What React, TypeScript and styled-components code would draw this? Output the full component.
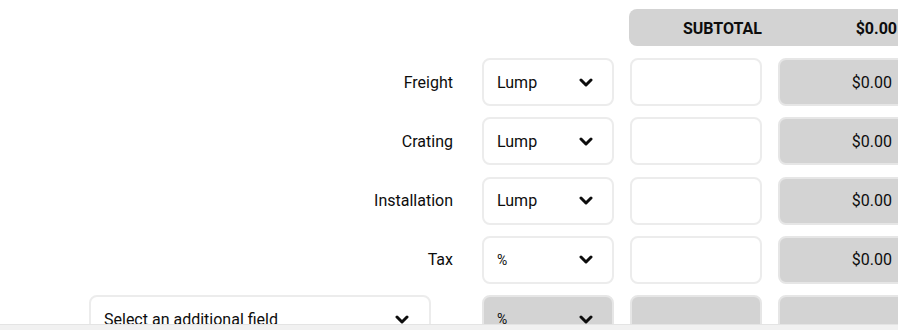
import React from "react";
import styled, { createGlobalStyle } from "styled-components";

const Global = createGlobalStyle`
  html, body { margin: 0; padding: 0; background: #fff; overflow: hidden; }
  body { font-family: Roboto, "Noto Sans", Arial, sans-serif; color: #0d0d0d; }
`;

const Page = styled.div`
  width: 911px;
  padding: 9px 0 0 89px;
  box-sizing: border-box;
`;

const Grid = styled.div`
  display: grid;
  grid-template-columns: 377px 132px 132px 132px;
  column-gap: 16px;
  row-gap: 11.25px;
`;

const SubtotalBar = styled.div`
  grid-column: 3 / span 2;
  margin-left: -1px;
  height: 37px;
  background: #d3d3d3;
  border-radius: 8px;
  display: grid;
  grid-template-columns: 133px 1fr;
  align-items: center;
  font-weight: 700;
  font-size: 16px;
  padding-top: 1px;
  box-sizing: border-box;
  margin-bottom: 0.75px;
`;

const SubLabel = styled.span`
  text-align: right;
`;

const SubValue = styled.span`
  text-align: right;
  padding-right: 13px;
`;

const Label = styled.div`
  display: flex;
  align-items: center;
  justify-content: flex-end;
  padding-right: 13px;
  font-size: 16px;
  height: 48px;
`;

const Box = styled.div<{ $disabled?: boolean }>`
  height: 48px;
  box-sizing: border-box;
  border: 2px solid ${(p) => (p.$disabled ? "#e6e6e6" : "#ececec")};
  border-radius: 8px;
  background: ${(p) => (p.$disabled ? "#d3d3d3" : "#fff")};
`;

const SelectBox = styled(Box)<{ $small?: boolean; $right?: number }>`
  display: flex;
  align-items: center;
  justify-content: space-between;
  padding: 0 ${(p) => p.$right ?? 19}px 0 13px;
  font-size: ${(p) => (p.$small ? "14px" : "16px")};
`;

const AdditionalSelect = styled(SelectBox)`
  width: 342px;
`;

const Amount = styled(Box)`
  background: #d3d3d3;
  border-color: #e6e6e6;
  display: flex;
  align-items: center;
  justify-content: flex-end;
  padding-right: 16px;
  font-size: 16px;
`;

const Footer = styled.div`
  position: fixed;
  left: 0;
  right: 0;
  bottom: 0;
  height: 5px;
  background: #f1f1f1;
  border-top: 1px solid #e4e4e4;
`;

const Chevron = () => (
  <svg width="14" height="9" viewBox="0 0 14 9" fill="none">
    <path d="M2 2l5 5 5-5" stroke="#0d0d0d" strokeWidth="3" strokeLinecap="round" strokeLinejoin="round" />
  </svg>
);

const rows = [
  { label: "Freight", unit: "Lump" },
  { label: "Crating", unit: "Lump" },
  { label: "Installation", unit: "Lump" },
  { label: "Tax", unit: "%" },
];

export default function App() {
  return (
    <>
      <Global />
      <Page>
        <Grid>
          <SubtotalBar>
            <SubLabel>SUBTOTAL</SubLabel>
            <SubValue>$0.00</SubValue>
          </SubtotalBar>
          {rows.map((r) => (
            <React.Fragment key={r.label}>
              <Label>{r.label}</Label>
              <SelectBox $small={r.unit === "%"}>
                <span>{r.unit}</span>
                <Chevron />
              </SelectBox>
              <Box />
              <Amount>$0.00</Amount>
            </React.Fragment>
          ))}
          <AdditionalSelect $right={20}>
            <span>Select an additional field</span>
            <Chevron />
          </AdditionalSelect>
          <SelectBox $disabled $small>
            <span>%</span>
            <Chevron />
          </SelectBox>
          <Box $disabled />
          <Amount />
        </Grid>
      </Page>
      <Footer />
    </>
  );
}
